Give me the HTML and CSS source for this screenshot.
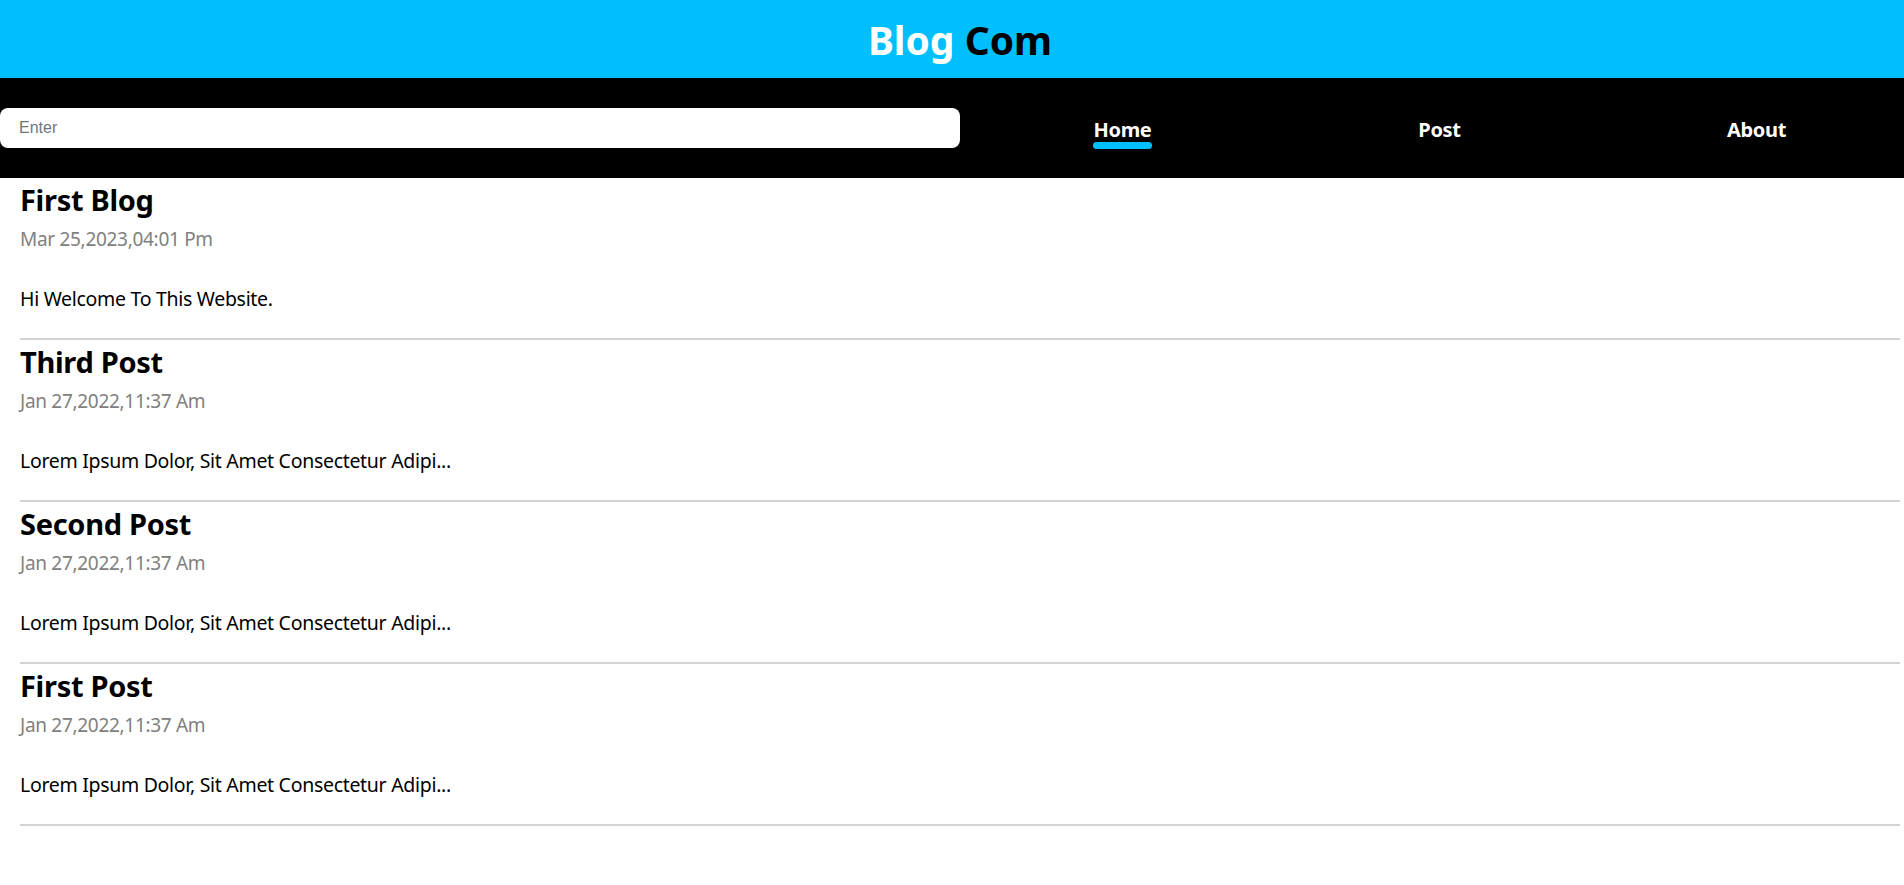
FILE: index.html
```html
<!DOCTYPE html>
<html lang="en">
<head>
<meta charset="utf-8">
<title>Blog Com</title>
<link rel="stylesheet" href="styles.css">
</head>
<body>
<header class="site-header">
  <h1 class="brand"><span class="brand-light">Blog</span> <span class="brand-dark">Com</span></h1>
</header>
<nav class="nav-bar">
  <input class="search" type="text" placeholder="Enter">
  <ul class="nav-links">
    <li class="nav-item"><a class="nav-link active" href="#">Home</a></li>
    <li class="nav-item"><a class="nav-link" href="#">Post</a></li>
    <li class="nav-item"><a class="nav-link" href="#">About</a></li>
  </ul>
</nav>
<main class="post-list">
  <article class="post">
    <h2 class="post-title">First Blog</h2>
    <p class="post-date">Mar 25,2023,04:01 Pm</p>
    <p class="post-body">Hi Welcome To This Website.</p>
  </article>
  <article class="post">
    <h2 class="post-title">Third Post</h2>
    <p class="post-date">Jan 27,2022,11:37 Am</p>
    <p class="post-body">Lorem Ipsum Dolor, Sit Amet Consectetur Adipi...</p>
  </article>
  <article class="post">
    <h2 class="post-title">Second Post</h2>
    <p class="post-date">Jan 27,2022,11:37 Am</p>
    <p class="post-body">Lorem Ipsum Dolor, Sit Amet Consectetur Adipi...</p>
  </article>
  <article class="post">
    <h2 class="post-title">First Post</h2>
    <p class="post-date">Jan 27,2022,11:37 Am</p>
    <p class="post-body">Lorem Ipsum Dolor, Sit Amet Consectetur Adipi...</p>
  </article>
</main>
</body>
</html>
```

FILE: styles.css
```css
* { box-sizing: border-box; }

html, body {
  margin: 0;
  padding: 0;
  background: #ffffff;
}

body {
  font-family: "Noto Sans", "Open Sans", sans-serif;
  color: #000;
  overflow: hidden;
}

.site-header {
  height: 78px;
  padding-left: 16px;
  background: #00bfff;
  display: flex;
  align-items: center;
  justify-content: center;
}

.brand {
  margin: 0;
  font-size: 39px;
  font-weight: 700;
  line-height: 1;
}

.brand-light { color: #ffffff; }
.brand-dark { color: #000000; }

.nav-bar {
  height: 100px;
  background: #000;
  display: flex;
  align-items: center;
  overflow: hidden;
}

.search {
  width: 960px;
  height: 40px;
  flex: 0 0 960px;
  border: none;
  border-radius: 8px;
  padding: 0 19px;
  font-family: "Liberation Sans", Arial, sans-serif;
  font-size: 16px;
  color: #000;
  background: #fff;
  outline: none;
}

.search::placeholder {
  color: #757575;
}

.nav-links {
  list-style: none;
  margin: 0;
  padding: 0 0 0 4px;
  flex: 0 0 auto;
  display: grid;
  grid-template-columns: repeat(3, 317px);
  align-items: start;
}

.nav-item {
  display: flex;
  justify-content: center;
  padding-top: 10px;
}

.nav-link {
  color: #fff;
  text-decoration: none;
  font-weight: 700;
  font-size: 20px;
  line-height: 26px;
  letter-spacing: -0.3px;
  padding-bottom: 6px;
  position: relative;
}

.nav-link.active::after {
  content: "";
  position: absolute;
  left: 0;
  right: 0;
  bottom: 0;
  height: 7px;
  border-radius: 4px;
  background: #00bfff;
}

.post-list {
  display: flex;
  flex-direction: column;
}

.post {
  margin: 0 4px 0 20px;
  height: 162px;
  padding-top: 2px;
  border-bottom: 2px solid #d3d3d3;
}

.post-title {
  margin: 0;
  font-size: 29px;
  font-weight: 700;
  line-height: 40px;
  letter-spacing: -0.3px;
}

.post-date {
  margin: 5px 0 0;
  font-size: 19px;
  line-height: 28px;
  color: #808080;
  letter-spacing: -0.3px;
}

.post-body {
  margin: 32px 0 0;
  font-size: 19.5px;
  line-height: 28px;
  letter-spacing: -0.3px;
}
```
